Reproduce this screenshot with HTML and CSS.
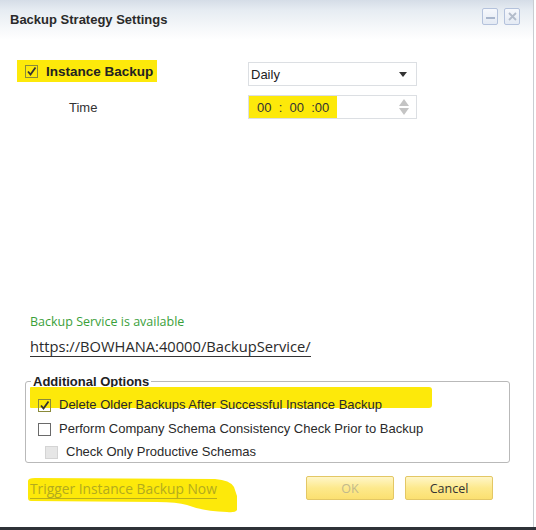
FILE: index.html
```html
<!DOCTYPE html>
<html>
<head>
<meta charset="utf-8">
<link rel="stylesheet" href="styles.css">
</head>
<body>
<div class="dialog">
  <div class="titlebar">
    <div class="title">Backup Strategy Settings</div>
    <div class="winbtns">
      <span class="winbtn"><svg width="11" height="11" viewBox="0 0 11 11"><rect x="1" y="6" width="9" height="2" fill="#a9b6cc"/></svg></span>
      <span class="winbtn"><svg width="11" height="11" viewBox="0 0 11 11"><path d="M2 2 L9 9 M9 2 L2 9" stroke="#b3bccb" stroke-width="1.8"/></svg></span>
    </div>
  </div>

  <div class="schedule">
    <div class="cell-left">
      <label class="hl instance">
        <span class="cb checked hlcb"><svg width="11" height="11" viewBox="0 0 11 11"><path d="M2 5.5 L4.5 8.5 L9.5 1.5" fill="none" stroke="#333" stroke-width="1.8"/></svg></span>
        <span class="instance-text">Instance Backup</span>
      </label>
    </div>
    <div class="select">
      <span>Daily</span>
      <svg width="8" height="5" viewBox="0 0 8 5"><path d="M0 0 H8 L4 5 Z" fill="#333"/></svg>
    </div>
    <div class="time-label">Time</div>
    <div class="timebox">
      <span class="time-hl">00&nbsp;&nbsp;:&nbsp;&nbsp;00&nbsp;&nbsp;:00</span>
      <span class="spin">
        <svg width="10" height="7" viewBox="0 0 10 7"><path d="M0 7 L5 0 L10 7 Z" fill="#c4c4c4"/></svg>
        <svg width="10" height="7" viewBox="0 0 10 7"><path d="M0 0 L5 7 L10 0 Z" fill="#c4c4c4"/></svg>
      </span>
    </div>
  </div>

  <div class="service">
    <div class="status">Backup Service is available</div>
    <div class="url">https://BOWHANA:40000/BackupService/</div>
  </div>

  <fieldset class="options">
    <legend>Additional Options</legend>
    <label class="opt optrow">
      <span class="cb checked hlcb"><svg width="11" height="11" viewBox="0 0 11 11"><path d="M2 5.5 L4.5 8.5 L9.5 1.5" fill="none" stroke="#333" stroke-width="1.8"/></svg></span>
      <span class="opt-text">Delete Older Backups After Successful Instance Backup</span>
    </label>
    <label class="opt">
      <span class="cb"></span>
      <span class="opt-text">Perform Company Schema Consistency Check Prior to Backup</span>
    </label>
    <label class="opt sub">
      <span class="cb disabled"></span>
      <span class="opt-text">Check Only Productive Schemas</span>
    </label>
  </fieldset>

  <div class="footer">
    <div class="trigger">
      <svg class="marker" width="212" height="36" viewBox="0 0 212 36"><path d="M1 3 Q1 0 8 0 L188 1 Q203 2 207 9 L210 18 L210 32 Q208 35 200 34 Q175 33 160 27 Q150 24 130 24 L4 23 Q1 23 1 20 Z" fill="#fde90a"/></svg>
      <span class="trigger-text">Trigger Instance Backup Now</span>
    </div>
    <div class="buttons">
      <button class="btn disabled-btn">OK</button>
      <button class="btn">Cancel</button>
    </div>
  </div>
</div>
<div class="taskbar"></div>
</body>
</html>
```

FILE: styles.css
```css
html, body {
  margin: 0;
  padding: 0;
  width: 536px;
  height: 530px;
  overflow: hidden;
  background: #ffffff;
  font-family: "Liberation Sans", Arial, sans-serif;
  font-size: 12px;
  color: #222;
}

.dialog {
  width: 533px;
  height: 527px;
  border-right: 1px solid #c9cdd2;
  background: #fff;
  display: flex;
  flex-direction: column;
}

.titlebar {
  height: 40px;
  flex: none;
  background: linear-gradient(#d5dde7 0px, #e6ecf2 10px, #f6f8fa 28px, #ffffff 40px);
  display: flex;
  align-items: flex-start;
  justify-content: space-between;
  padding: 0 13px 0 10px;
}

.title {
  font-weight: bold;
  font-size: 13px;
  color: #2a2a2a;
  margin-top: 12px;
}

.winbtns {
  display: flex;
  gap: 6px;
  margin-top: 8px;
}

.winbtn {
  width: 14px;
  height: 15px;
  border: 1px solid #b4c2dc;
  border-radius: 2px;
  background: linear-gradient(#f6f8fc, #e4eaf4);
  display: flex;
  align-items: center;
  justify-content: center;
}

.schedule {
  display: grid;
  grid-template-columns: 231px 169px;
  grid-template-rows: 26px 24px;
  row-gap: 9px;
  padding-left: 17px;
  margin-top: 20px;
}

.hl {
  background: #fde90a;
}

.instance {
  display: flex;
  align-items: center;
  width: 140px;
  height: 22px;
  box-sizing: border-box;
  padding-left: 8px;
  gap: 8px;
}

.instance-text {
  font-weight: bold;
  font-size: 13.5px;
  color: #222;
}

.cb {
  width: 13px;
  height: 13px;
  box-sizing: border-box;
  border: 1px solid #6a6a6a;
  background: #fff;
  display: inline-flex;
  align-items: center;
  justify-content: center;
  flex: none;
}

.cb.hlcb {
  background: transparent;
  border-color: #8a8a3a;
}

.cb.disabled {
  background: #e6e6e6;
  border-color: #d4d4d4;
}

.select {
  margin-top: 2px;
  height: 24px;
  box-sizing: border-box;
  border: 1px solid #dcdfe3;
  display: flex;
  align-items: center;
  justify-content: space-between;
  padding: 0 9px 0 2px;
  font-size: 13px;
  color: #222;
}

.time-label {
  padding-left: 52px;
  align-self: center;
  font-size: 13px;
  color: #333;
}

.timebox {
  height: 24px;
  box-sizing: border-box;
  border: 1px solid #dcdfe3;
  display: flex;
  align-items: stretch;
  justify-content: space-between;
  padding-right: 7px;
  font-size: 13px;
}

.time-hl {
  background: #fde90a;
  width: 88px;
  box-sizing: border-box;
  padding-left: 8px;
  display: flex;
  align-items: center;
  color: #333;
}

.spin {
  display: flex;
  flex-direction: column;
  justify-content: center;
  gap: 2px;
}

.spin svg {
  display: block;
}

.service {
  margin-top: 195px;
  padding-left: 30px;
  font-family: "Open Sans", "Noto Sans", sans-serif;
}

.status {
  color: #3aa03a;
  font-size: 12.5px;
  line-height: 16px;
}

.url {
  display: inline-block;
  margin-top: 7px;
  font-size: 14.7px;
  line-height: 19px;
  color: #2a2a2a;
  border-bottom: 1px solid #333;
}

.options {
  margin: 17px 0 0 25px;
  width: 485px;
  box-sizing: border-box;
  border: 1px solid #b9b9b9;
  border-radius: 3px;
  padding: 3px 0 0 0;
  min-width: 0;
}

.options legend {
  font-weight: bold;
  font-size: 13px;
  line-height: 15px;
  color: #222;
  padding: 0 2px;
  margin-left: 5px;
}

.opt {
  position: relative;
  display: flex;
  align-items: center;
  gap: 8px;
  height: 24px;
  font-size: 13px;
  color: #2a2a2a;
  padding-left: 12px;
}

.opt-text {
  position: relative;
}

.opt .cb {
  position: relative;
  margin-top: 3px;
}

.optrow::before {
  content: "";
  position: absolute;
  left: 4px;
  top: -5px;
  width: 402px;
  height: 21px;
  background: #fde90a;
  border-radius: 1px 3px 3px 1px;
}

.opt.sub {
  padding-left: 19px;
  height: 22px;
}

.footer {
  display: flex;
  justify-content: space-between;
  align-items: flex-start;
  margin-top: 13px;
  padding: 0 40px 0 27px;
}

.trigger {
  position: relative;
  margin-top: 4px;
}

.marker {
  position: absolute;
  left: 0;
  top: -2px;
}

.trigger-text {
  position: relative;
  display: inline-block;
  margin-left: 3px;
  font-family: "Open Sans", "Noto Sans", sans-serif;
  font-size: 13.8px;
  line-height: 18px;
  color: #b3ab1e;
  border-bottom: 1px solid #b9ae1a;
}

.buttons {
  display: flex;
  gap: 11px;
}

.btn {
  width: 88px;
  height: 24px;
  border: 1px solid #e3c765;
  border-radius: 2px;
  background: linear-gradient(#fff6c8, #fde98c 50%, #fbe070);
  font-family: "Open Sans", "Noto Sans", sans-serif;
  font-size: 12.5px;
  color: #333;
  padding: 0;
}

.disabled-btn {
  color: #c2b98c;
}

.taskbar {
  height: 3px;
  background: #2e3238;
}
```
